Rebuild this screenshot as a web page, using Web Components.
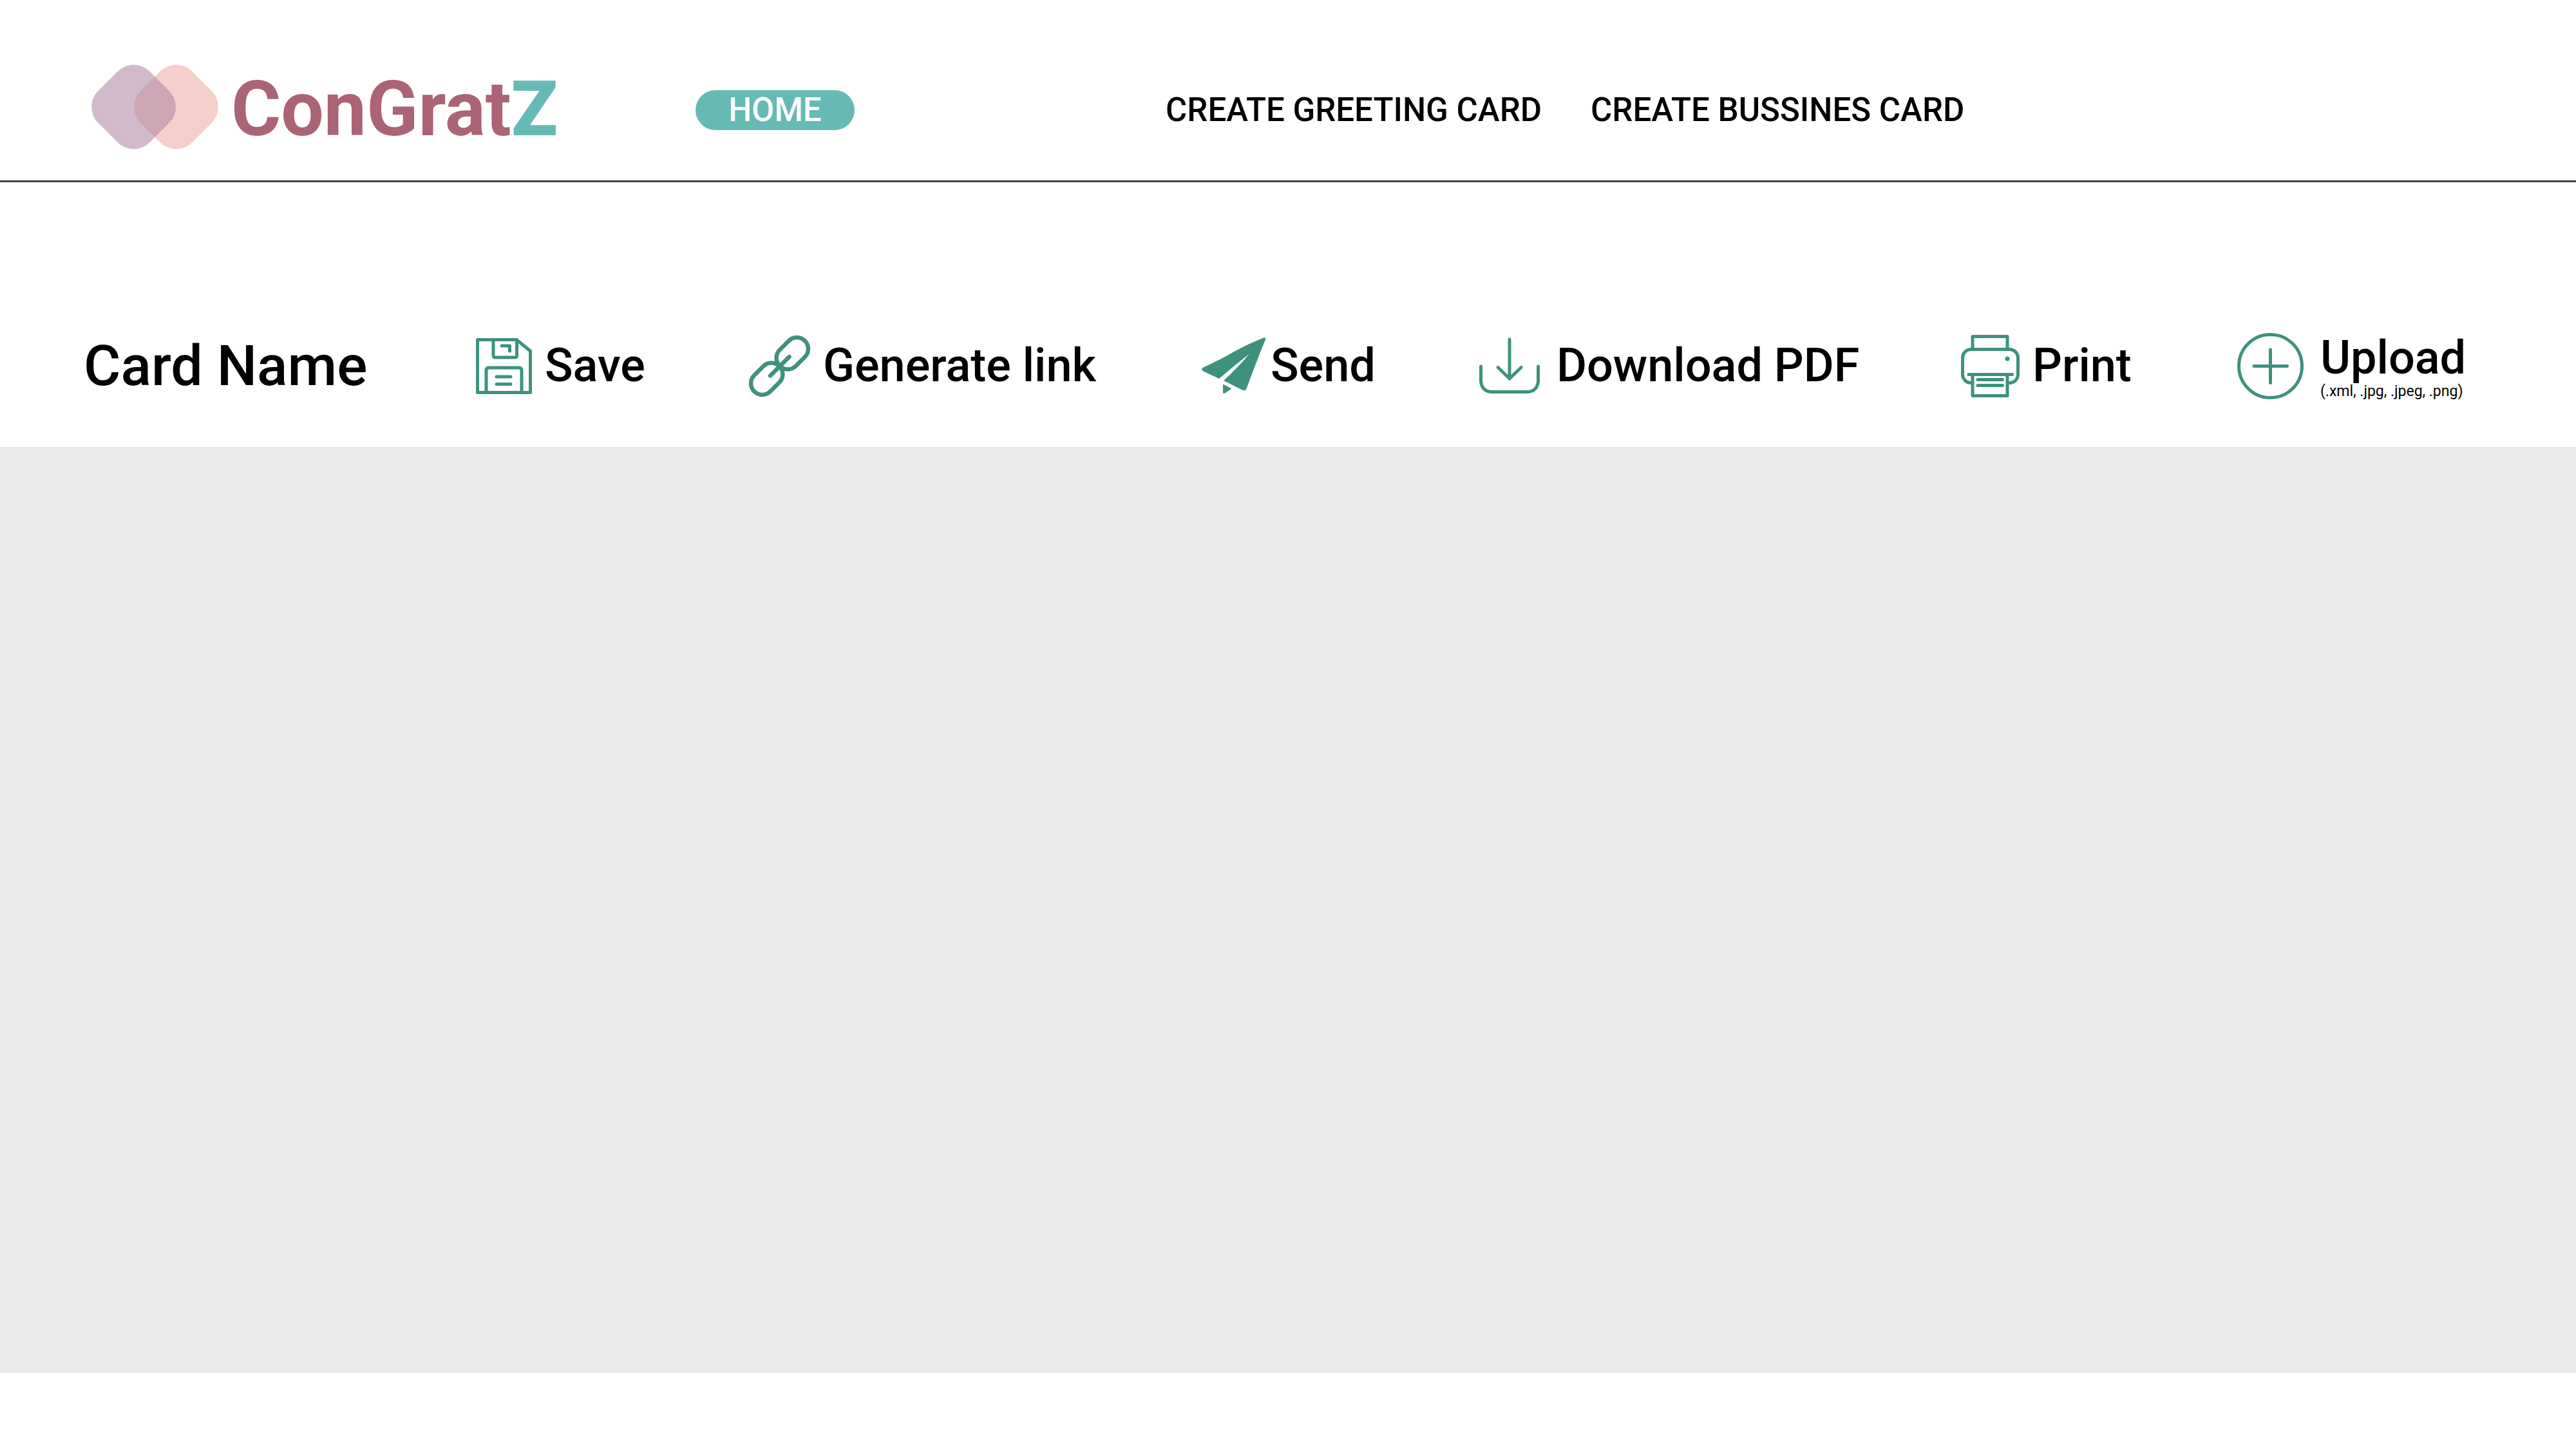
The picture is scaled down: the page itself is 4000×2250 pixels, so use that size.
<!DOCTYPE html>
<html lang="en">
<head>
<meta charset="utf-8">
<title>ConGratZ</title>
<style>
  body { margin: 0; background: #fff; color: #000; font-family: Roboto, "Liberation Sans", sans-serif; }
</style>
</head>
<body>
<congratz-app></congratz-app>

<script>
const define = (name, markup) => customElements.define(name, class extends HTMLElement {
  constructor() {
    super();
    this.attachShadow({ mode: 'open' }).innerHTML = markup;
  }
});

define('brand-logo', `
  <style>
    :host { display: block; }
    a { display: flex; align-items: flex-end; gap: 20px; color: #ab6376; text-decoration: none; font-size: 118px; line-height: 124px; font-weight: 700; white-space: nowrap; }
    svg { width: 197px; height: 132px; flex: none; }
    b { color: #66bab4; }
  </style>
  <a href="#">
    <svg viewBox="0 0 197 132" aria-hidden="true">
      <rect x="-56.5" y="-56.5" width="113" height="113" rx="35" transform="translate(131.5 66) rotate(45)" fill="#f6cfca"/>
      <rect x="-56.5" y="-56.5" width="113" height="113" rx="35" transform="translate(65.5 66) rotate(45)" fill="#b088a5" fill-opacity=".58"/>
    </svg>
    <span>ConGrat<b>Z</b></span>
  </a>`);

define('nav-link', `
  <style>
    :host { display: block; }
    a { display: block; color: #000; text-decoration: none; font-size: 51px; line-height: 62px; font-weight: 500; white-space: nowrap; }
    :host([current]) a { background: #66bab4; color: #fff; border-radius: 31px; width: 247px; text-align: center; }
  </style>
  <a href="#"><slot></slot></a>`);

define('site-header', `
  <style>
    :host { display: block; border-bottom: 3px solid #444; }
    header { display: grid; grid-template-columns: 938fr 730fr 2190fr; align-items: center; padding: 100px 0 48px 142px; }
    nav { display: flex; gap: 76px; padding-top: 10px; }
  </style>
  <header>
    <brand-logo></brand-logo>
    <nav aria-label="Home"><nav-link current>HOME</nav-link></nav>
    <nav aria-label="Create">
      <nav-link>CREATE GREETING CARD</nav-link>
      <nav-link>CREATE BUSSINES CARD</nav-link>
    </nav>
  </header>`);

define('tool-button', `
  <style>
    :host { display: block; }
    button { display: flex; align-items: center; gap: var(--gap, 20px); margin: 0; padding: 0; border: 0; background: none; color: inherit; font: 500 72px/80px Roboto, "Liberation Sans", sans-serif; text-align: left; white-space: nowrap; }
    .label { display: flex; flex-direction: column; }
    ::slotted(svg) { flex: none; fill: none; stroke: #3f917f; stroke-width: 5px; stroke-linecap: round; overflow: visible; }
    ::slotted(small) { font-size: 23px; line-height: 24px; font-weight: 400; }
  </style>
  <button type="button"><slot name="icon"></slot><span class="label"><slot></slot><slot name="note"></slot></span></button>`);

define('card-toolbar', `
  <style>
    :host { display: block; }
    .bar { display: grid; grid-template-columns: 609fr 424fr 703fr 431fr 748fr 429fr 396fr; align-items: center; padding: 233px 130px 74px 130px; }
    h1 { margin: 0; font-size: 88px; line-height: 104px; font-weight: 500; white-space: nowrap; }
    .tight { --gap: 8px; }
    .wide { --gap: 26px; }
  </style>
  <div class="bar" role="toolbar" aria-label="Card">
    <h1>Card Name</h1>
    <tool-button>
      <svg slot="icon" width="87" height="87" viewBox="0 0 87 87" aria-hidden="true" stroke-linejoin="round">
        <path d="M2.5 2.5H63L84.5 20V84.5H2.5ZM27 2.5V27Q27 30 30 30H60.500Q63.500 30 63.500 27V2.500M40 12H52.500V20M16 84.500V50Q16 46 20 46H67Q71 46 71 50V84.500M32 60H54M32 71.500H54"/>
      </svg>Save
    </tool-button>
    <tool-button>
      <svg slot="icon" width="95" height="95" viewBox="0 0 95 95" aria-hidden="true">
        <g style="stroke-width:6.5px">
          <rect x="-27.600" y="-17.700" width="55.200" height="35.400" rx="17.700" transform="translate(67.300 27.700) rotate(-45)"/>
          <rect x="-27.600" y="-17.700" width="55.200" height="35.400" rx="17.700" transform="translate(27.700 67.300) rotate(-45)"/>
          <path d="M33 62.500L62.500 33"/>
        </g>
      </svg>Generate link
    </tool-button>
    <tool-button class="tight">
      <svg slot="icon" width="99" height="88" viewBox="0 0 99 88" aria-hidden="true">
        <path style="fill:#3f917f;stroke:none" d="M1.500 47Q30 34 52 21Q74 9 96 .5Q100 -1 99 3.500Q92 19 69.500 79.500Q68 83.500 64 82L34 67Q56 47 74 25.500Q50 44 27 64L1.500 52Q-1 49 1.500 47ZM33 72.500L46.500 79.500L36 86.500Q33 88 33 85Z"/>
      </svg>Send
    </tool-button>
    <tool-button class="wide">
      <svg slot="icon" width="94" height="88" viewBox="0 0 94 88" aria-hidden="true" stroke-linejoin="round">
        <path d="M47 3V64M29 46.500L47 64L65 46.500M2.500 45V68Q4 83 18 84.500H76Q90 83 91.500 68V45"/>
      </svg>Download PDF
    </tool-button>
    <tool-button>
      <svg slot="icon" width="91" height="97" viewBox="0 0 91 97" aria-hidden="true" stroke-linejoin="round">
        <path d="M18 22V2.500H72V22M18 74.500H15.500A13 13 0 0 1 2.500 61.500V35.500A13 13 0 0 1 15.500 22.500H75.500A13 13 0 0 1 88.500 35.500V61.500A13 13 0 0 1 75.500 74.500H72M12 61.500H79.500M18 61.500V94.500H72V61.500M26 69.500H64.500M26 78.500H64.500"/>
        <circle cx="72" cy="37" r="3.500" style="fill:#3f917f;stroke:none"/>
      </svg>Print
    </tool-button>
    <tool-button class="wide">
      <svg slot="icon" width="103" height="103" viewBox="0 0 103 103" aria-hidden="true">
        <circle cx="51.500" cy="51.500" r="49"/>
        <path d="M26 51.500H77.500M51.500 26V77.500"/>
      </svg>Upload
      <small slot="note">(.xml, .jpg, .jpeg, .png)</small>
    </tool-button>
  </div>`);

define('card-canvas', `
  <style>:host { display: block; background: #e9e9e9; }</style>
  <slot></slot>`);

define('congratz-app', `
  <style>
    :host { display: flex; flex-direction: column; min-height: 100vh; box-sizing: border-box; padding-bottom: 118px; }
    main { display: flex; flex-direction: column; flex: 1; }
    card-canvas { flex: 1; }
  </style>
  <site-header></site-header>
  <main>
    <card-toolbar></card-toolbar>
    <card-canvas role="region" aria-label="Card canvas"></card-canvas>
  </main>`);
</script>
</body>
</html>
